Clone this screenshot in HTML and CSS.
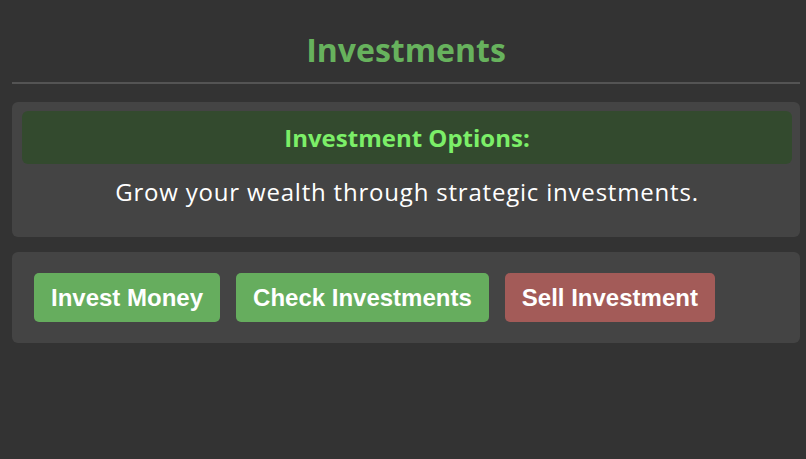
FILE: index.html
```html
<!DOCTYPE html>
<html lang="en">
<head>
  <meta charset="UTF-8">
  <meta name="viewport" content="width=device-width, initial-scale=1.0">
  <title>Investments</title>
  <link rel="stylesheet" href="styles.css">
</head>
<body>
  <div class="page">
    <h1>Investments</h1>
    <hr class="divider">

    <!--OPTIONS-->
    <div class="card">
      <h2 class="card-title">Investment Options:</h2>
      <p class="card-text">Grow your wealth through strategic investments.</p>
    </div>

    <!--ACTIONS-->
    <div class="card actions">
      <button class="btn btn-green">Invest Money</button>
      <button class="btn btn-green">Check Investments</button>
      <button class="btn btn-red">Sell Investment</button>
    </div>
  </div>
</body>
</html>
```

FILE: styles.css
```css
body {
  background-color: #333333;
  margin: 0;
  font-family: 'Open Sans', 'DejaVu Sans', sans-serif;
}
.page {
  width: 788px;
  margin-left: 12px;
  padding-top: 28px;
}
h1 {
  text-align: center;
  color: #67b25d;
  font-size: 32px;
  font-weight: 700;
  margin: 0;
  line-height: 44px;
}
.divider {
  border: none;
  height: 2px;
  background-color: #545454;
  margin: 10px 0 18px 0;
}
.card {
  background-color: #444444;
  border-radius: 6px;
  padding: 9px 8px 1px 10px;
  margin-bottom: 15px;
}
.card-title {
  background-color: #334a2e;
  border-radius: 6px;
  margin: 0;
  height: 53px;
  line-height: 53px;
  text-align: center;
  color: #7cef68;
  font-size: 24px;
  font-weight: 700;
}
.card-text {
  text-align: center;
  color: #ffffff;
  font-size: 24px;
  letter-spacing: 0.8px;
  margin: 11px 0 27px 0;
  line-height: 34px;
}
.actions {
  display: flex;
  gap: 16px;
  padding: 21px 22px;
}
.btn {
  height: 49px;
  padding: 0 17px;
  border: none;
  border-radius: 5px;
  color: white;
  font-family: 'Liberation Sans', Arial, sans-serif;
  font-weight: bold;
  font-size: 24px;
  cursor: pointer;
}
.btn-green {
  background-color: #66ad5e;
}
.btn-red {
  background-color: #a35b58;
}
.btn:hover {
  opacity: 0.8;
}
```
